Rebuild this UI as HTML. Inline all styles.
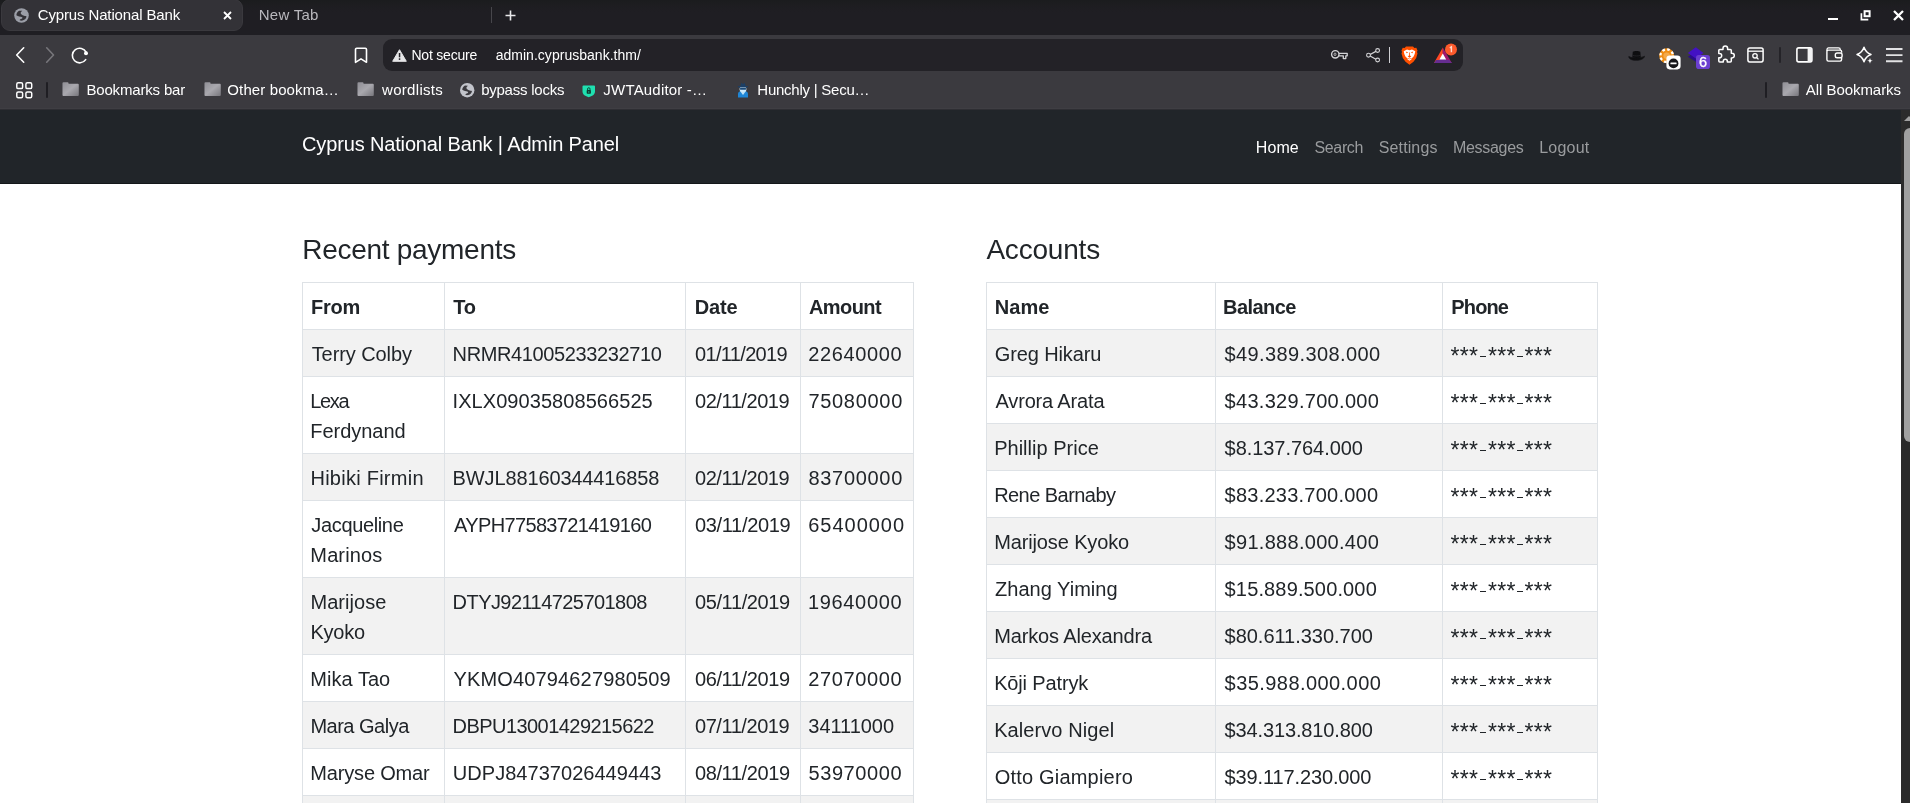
<!DOCTYPE html>
<html><head><meta charset="utf-8"><title>Cyprus National Bank</title>
<style>
*{box-sizing:border-box}
html,body{margin:0;padding:0;overflow:hidden}
body{width:1910px;height:803px;overflow:hidden;position:relative;background:#fff;font-family:"Liberation Sans",sans-serif;}
.t{white-space:nowrap;display:inline-block}
.a{position:absolute}
/* ---------- browser chrome ---------- */
#chrome{will-change:transform;position:absolute;left:0;top:0;width:1910px;height:110px;background:#3b3a3f;box-shadow:inset 0 -1px 0 #2e2e33,inset 0 -2px 0 #3f3e43;color:#fff;font-size:15px}
#tabstrip{position:absolute;left:0;top:0;width:1910px;height:35px;background:linear-gradient(#1b1c1e 0,#1d1d20 4px,#1f1e23 12px,#1f1e23 100%)}
#tab1{position:absolute;left:1px;top:-1px;width:242px;height:32px;background:#333237;border-radius:9px;border:1px solid #3a393e}
.tt{position:absolute;top:5px;height:20px;line-height:20px;font-size:15px;color:#fff}
#urlbar{position:absolute;left:383px;top:39px;width:1080px;height:32px;background:#232227;border-radius:9px}
.ut{position:absolute;top:45px;height:20px;line-height:20px;font-size:14px;color:#fff}
.bm{position:absolute;top:80px;height:20px;line-height:20px;font-size:15px;color:#fff}
.vsep{position:absolute;width:2px;background:#1f1e23;border-radius:1px}
.fold{position:absolute;top:82px;width:18px;height:14px;transform-origin:0 0;transform:scaleX(0.960)}
svg{position:absolute;overflow:visible}
/* ---------- page ---------- */
#page{will-change:transform;position:absolute;left:0;top:110px;width:1901px;height:693px;overflow:hidden;background:#fff;color:#212529}
#nav{position:absolute;left:0;top:0;width:1901px;height:74px;background:#212529;border-bottom:1px solid #14171a}
.brand{position:absolute;left:301.5px;top:19px;font-size:20px;line-height:30px;color:#fff}
.nl{position:absolute;top:26px;font-size:16px;line-height:24px;color:#9a9c9e}
.h3{position:absolute;top:122.800px;font-size:28px;line-height:34px;color:#212529}
.tb{position:absolute;top:172px;border-collapse:collapse;table-layout:fixed;font-size:20px;line-height:30px;color:#212529}
.tb td,.tb th{border:1px solid #dee2e6;padding:9px 8px 7px 8px;text-align:left;vertical-align:top;overflow:hidden;white-space:nowrap}
.tb th{font-weight:bold}
.tb tr.s td{background:#f2f2f2}
.ph{display:inline-block;position:relative;width:101px;height:30px;vertical-align:top}
.ph i{font-style:normal;position:absolute;top:2.300px;font-size:23px;line-height:30px;letter-spacing:0.350px;white-space:nowrap}
.ph u{position:absolute;top:16.500px;width:6.100px;height:1.500px;background:#212529}
/* ---------- scrollbar ---------- */
#sb{position:absolute;left:1901px;top:110px;width:9px;height:693px;background:#2b2b2b;overflow:hidden}
#sb .arrow{position:absolute;left:3px;top:6px;width:0;height:0;border-left:5px solid transparent;border-right:5px solid transparent;border-bottom:5px solid #a0a0a0}
#sb .thumb{position:absolute;left:3px;top:18px;width:12px;height:314px;border-radius:6px;background:#a0a0a0}

</style></head>
<body>
<div id="chrome">
 <div id="tabstrip">
  <div id="tab1"></div>
  <!-- globe favicon -->
  <svg style="left:13.5px;top:7.5px" width="15" height="15" viewBox="0 0 16 16"><circle cx="8" cy="8" r="7.8" fill="#9b9ea7"/><path d="M5.5 2.9L8.8 3C7.600 4 6.800 5 7.300 6C7.800 7 9 7.400 10 8C11 8.600 12 8.400 13.300 8.900C13.200 11 11.600 12.800 9.200 13.400C7.800 13.700 6.600 13.500 6 13C6 12 7.200 11.900 8.200 11.400C9.400 10.800 9.400 10 8.200 9.500C6.800 9 4.500 9 2.500 7.600C2.700 5.400 3.800 3.700 5.500 2.900Z" fill="#333237"/></svg>
  <div class="tt" style="left:37px"><span class="t " id="t0" style="margin-left:0.74px;letter-spacing:-0.137px">Cyprus National Bank</span></div>
  <svg style="left:222.5px;top:10.500px" width="9" height="9" viewBox="0 0 9 9"><path d="M1 1L8 8M8 1L1 8" stroke="#fff" stroke-width="1.800" fill="none"/></svg>
  <div class="tt" style="left:258.500px;color:#b9b8bd"><span class="t " id="t1" style="margin-left:0.17px;letter-spacing:0.273px">New Tab</span></div>
  <div class="a" style="left:491px;top:7px;width:1px;height:16px;background:#47464b"></div>
  <svg style="left:504.500px;top:9.500px" width="11" height="11" viewBox="0 0 11 11"><path d="M5.500 0.500V10.500M0.500 5.500H10.500" stroke="#e8e8ea" stroke-width="1.600" fill="none"/></svg>
  <!-- window controls -->
 <div class="a" style="left:1828px;top:17.600px;width:10px;height:2.300px;background:#fff"></div>
 <svg style="left:1859.5px;top:9.5px" width="11" height="11" viewBox="0 0 11 11"><rect x="4.6" y="1.2" width="5" height="5" stroke="#fff" stroke-width="2" fill="none"/><path d="M1.4 3.3V9.6H8.3" stroke="#fff" stroke-width="1.7" fill="none"/></svg>
  <svg style="left:1892.500px;top:10px" width="11" height="11" viewBox="0 0 11 11"><path d="M1 1L10 10M10 1L1 10" stroke="#fff" stroke-width="2.300" fill="none"/></svg>
 </div>
 <!-- toolbar -->
 <svg style="left:15px;top:47px" width="11" height="16" viewBox="0 0 11 16"><path d="M8.7 0.8L1.7 8L8.7 15.200" stroke="#fff" stroke-width="1.600" fill="none" stroke-linecap="round" stroke-linejoin="round"/></svg>
 <svg style="left:45px;top:47px" width="11" height="16" viewBox="0 0 11 16"><path d="M1.7 0.8L8.5 8L1.7 15.200" stroke="#77767b" stroke-width="1.600" fill="none" stroke-linecap="round" stroke-linejoin="round"/></svg>
 <svg style="left:71px;top:46.5px" width="18" height="17" viewBox="0 0 18 17"><path d="M15.2 5.3A7.300 7.300 0 1 0 14.700 12.600" stroke="#fff" stroke-width="1.600" fill="none" stroke-linecap="round"/><circle cx="15" cy="6.200" r="2" fill="#fff"/></svg>
 <svg style="left:353.500px;top:47px" width="14" height="17" viewBox="0 0 14 17"><path d="M1.500 2.500a1.200 1.200 0 0 1 1.200-1.200H11.300a1.200 1.200 0 0 1 1.200 1.200V15.300L7 11.800L1.500 15.300Z" stroke="#fff" stroke-width="1.600" fill="none" stroke-linejoin="round"/></svg>
 <div id="urlbar"></div>
 <svg style="left:391.500px;top:48.500px" width="15" height="13" viewBox="0 0 15 13"><path d="M7.500 0.700L14.300 12.300H0.700Z" fill="#e6e6e8" stroke="#e6e6e8" stroke-width="1" stroke-linejoin="round"/><rect x="6.800" y="4" width="1.500" height="4.300" fill="#232227"/><rect x="6.800" y="9.300" width="1.500" height="1.600" fill="#232227"/></svg>
 <div class="ut" style="left:411px"><span class="t " id="t2" style="margin-left:0.47px;letter-spacing:-0.206px">Not secure</span></div>
 <div class="ut" style="left:494.500px"><span class="t " id="t3" style="margin-left:1.16px;letter-spacing:0.026px">admin.cyprusbank.thm/</span></div>
 <!-- url bar right icons -->
 <svg style="left:1330.7px;top:49px" width="17" height="11" viewBox="0 0 17 11"><circle cx="4.3" cy="5.3" r="3.7" stroke="#d4d4d7" stroke-width="1.400" fill="none"/><ellipse cx="4" cy="5.3" rx="1" ry="1.300" stroke="#d4d4d7" stroke-width="0.800" fill="none"/><path d="M8 4.300H16.200V6.800H14.800V9.600H12.300V6.800H8" stroke="#d4d4d7" stroke-width="1.300" fill="none" stroke-linejoin="round"/></svg>
 <svg style="left:1366px;top:47.700px" width="14.500" height="15" viewBox="0 0 14.500 15"><path d="M11.200 2.600L2.800 7.200L11.200 11.900" stroke="#d4d4d7" stroke-width="1.200" fill="none"/><circle cx="11.600" cy="2.500" r="1.900" fill="#232227" stroke="#d4d4d7" stroke-width="1.100"/><circle cx="2.500" cy="7.200" r="1.900" fill="#232227" stroke="#d4d4d7" stroke-width="1.100"/><circle cx="11.600" cy="12" r="1.900" fill="#232227" stroke="#d4d4d7" stroke-width="1.100"/></svg>
 <div class="a" style="left:1389px;top:47px;width:1.200px;height:16px;background:#cfcfd3"></div>
 <!-- brave lion -->
 <svg style="left:1400.5px;top:45.500px" width="17" height="19" viewBox="0 0 17 19"><path d="M5 0.500H12L13.400 2L15.300 1.800L16.500 4.500L16 6L16.500 7.500L15.200 12L12.500 15.800L8.500 18.700L4.500 15.800L1.800 12L0.500 7.500L1 6L0.500 4.500L1.700 1.800L3.600 2Z" fill="#ff5000"/><path d="M8.500 4.300L11 3.500L14.300 5.300L13.700 8L12.600 10.500L10.800 12.200L10.600 13.300L8.500 14.800L6.400 13.300L6.200 12.200L4.400 10.500L3.300 8L2.700 5.300L6 3.500Z" fill="#fff"/><path d="M4.800 5.600L7.200 6.500L5.600 7.200ZM12.200 5.600L9.800 6.500L11.400 7.200ZM8.100 6.500H8.900V9.500L10.300 10.300L8.500 11.800L6.700 10.300L8.100 9.500ZM6.300 12.100L8.500 12.700L10.700 12.100L10.500 12.800L8.500 13.300L6.500 12.800Z" fill="#ff5000"/></svg>
 <!-- BAT triangle -->
 <svg style="left:1433px;top:42.500px" width="26" height="22" viewBox="0 0 26 22"><path d="M9.800 4.400L1 20H9.800Z" fill="#ff4724"/><path d="M9.800 4.400L18.800 20H9.800Z" fill="#a0176e"/><path d="M1 20H18.800L9.800 14.500Z" fill="#662d91"/><path d="M1 20H18.800L16.300 17H3.200Z" fill="#662d91"/><path d="M9.800 10.500L13.200 16.600H6.400Z" fill="#fff"/><circle cx="18" cy="6.500" r="6" fill="#fc5a2c"/><path d="M16.800 4.800L18.400 3.800V9.300" stroke="#ffd9cc" stroke-width="1.400" fill="none"/></svg>
 <!-- extension icons -->
 <svg style="left:1627.5px;top:49.500px" width="18" height="12" viewBox="0 0 18 12"><path d="M0.8 6.500C0.800 9.500 5 10.300 8.500 10.300S16 9 16.500 6.200C14 8 3.500 8.500 0.800 6.500Z" fill="#0e0e10" stroke="#141416" stroke-width="0.800"/><path d="M4.300 7.300L4.800 1.800C6 0.600 11 0.600 12.300 1.800L12.800 7.300C10.500 8.300 6.500 8.300 4.300 7.300Z" fill="#0e0e10"/><path d="M4.500 5.200C7 6.200 10.500 6.200 12.700 5.200" stroke="#2a2a2e" stroke-width="0.700" fill="none"/></svg>
 <svg style="left:1658.5px;top:47.500px" width="24" height="24" viewBox="0 0 24 24"><circle cx="7.700" cy="7.700" r="7.500" fill="#ee8d16"/><circle cx="7.700" cy="7.700" r="6.300" fill="none" stroke="#fff" stroke-width="2.200" stroke-dasharray="2.600 2.300"/><circle cx="7.700" cy="7.700" r="3.300" fill="#f4a94a"/><rect x="7.400" y="7.500" width="14.200" height="13.900" rx="3.300" fill="#fff"/><circle cx="14.500" cy="15.400" r="4.900" fill="#17171a"/><rect x="11.400" y="14.500" width="6.200" height="1.800" rx="0.500" fill="#fff"/></svg>
 <svg style="left:1687px;top:47px" width="24" height="23" viewBox="0 0 24 23"><path d="M0.800 9.800L8.800 5L16.500 9.800L8.800 14.800Z" fill="#2a0e86"/><path d="M0.800 6L8.800 0.200L16.500 6L8.800 11.500Z" fill="#4311c4"/><rect x="9" y="8" width="14" height="14" rx="2.800" fill="#6b3fd0"/><text x="16" y="19.700" font-family="Liberation Sans" font-size="14.500" fill="#fff" stroke="#fff" stroke-width="0.300" text-anchor="middle">6</text></svg>
 <svg style="left:1717px;top:45.300px" width="17" height="18" viewBox="0 0 17 18"><path d="M6 3.200a2.300 2.300 0 0 1 4.600 0V4.500H13.300a1 1 0 0 1 1 1V8.300H15a2.300 2.300 0 0 1 0 4.600H14.300V16a1 1 0 0 1-1 1H10.300V16.200a2 2 0 0 0-4 0V17H2.800a1 1 0 0 1-1-1V12.800H2.500a2.200 2.200 0 0 0 0-4.400H1.800V5.500a1 1 0 0 1 1-1H6Z" stroke="#fff" stroke-width="1.500" fill="none" stroke-linejoin="round"/></svg>
 <svg style="left:1746.800px;top:47.300px" width="17" height="16" viewBox="0 0 17 16"><rect x="0.900" y="0.900" width="15.200" height="14" rx="1.800" stroke="#fff" stroke-width="1.500" fill="none"/><path d="M0.900 4.200H16.100" stroke="#fff" stroke-width="1.300"/><circle cx="8" cy="8.800" r="2.200" stroke="#fff" stroke-width="1.300" fill="none"/><path d="M9.600 10.500L11.500 12.400" stroke="#fff" stroke-width="1.300"/></svg>
 <div class="a" style="left:1779px;top:47.300px;width:2px;height:15.500px;background:#242328;border-radius:1px"></div>
 <svg style="left:1795.7px;top:47.300px" width="17" height="16" viewBox="0 0 17 16"><rect x="0.900" y="0.900" width="15" height="14" rx="1.800" stroke="#fff" stroke-width="1.600" fill="none"/><path d="M11.600 0.900H14.100a1.800 1.800 0 0 1 1.800 1.800V13.100a1.800 1.800 0 0 1-1.800 1.800H11.600Z" fill="#f2f2f3"/></svg>
 <svg style="left:1825.7px;top:47.400px" width="17" height="15" viewBox="0 0 17 15"><path d="M15.600 5.800V4.600a1.500 1.500 0 0 0-1.500-1.500H2.400a1.500 1.500 0 0 0-1.500 1.500V12.600a1.500 1.500 0 0 0 1.500 1.500H14.100a1.500 1.500 0 0 0 1.500-1.500V11" stroke="#fff" stroke-width="1.400" fill="none"/><path d="M1 4V2.400a1.500 1.500 0 0 1 1.500-1.500H12.500a1.800 1.800 0 0 1 1.800 1.800V3" stroke="#fff" stroke-width="1.300" fill="none"/><rect x="9.300" y="6" width="6.800" height="4.800" rx="1.800" stroke="#fff" stroke-width="1.400" fill="none"/></svg>
 <svg style="left:1855.5px;top:45.800px" width="18" height="18" viewBox="0 0 18 18"><path d="M8 1.300Q9.800 6.700 15 8.500Q9.800 10.300 8 15.700Q6.200 10.300 1 8.500Q6.200 6.700 8 1.300Z" stroke="#fff" stroke-width="1.500" fill="none" stroke-linejoin="round"/><path d="M14 11.800C14.400 14 14.800 14.400 17 14.800C14.800 15.200 14.400 15.600 14 17.800C13.600 15.600 13.200 15.200 11 14.800C13.200 14.400 13.600 14 14 11.800Z" fill="#fff"/></svg>
 <svg style="left:1885.800px;top:48px" width="16.500" height="14" viewBox="0 0 16.500 14"><path d="M0 1H16.500M0 7.100H16.500M0 13.200H16.500" stroke="#e2e2e4" stroke-width="1.900"/></svg>
 <!-- bookmarks bar -->
 <svg style="left:15.5px;top:81.700px" width="16.500" height="16.500" viewBox="0 0 17 17"><rect x="0.8" y="0.8" width="6" height="6" rx="1.500" stroke="#fff" stroke-width="1.500" fill="none"/><rect x="10.2" y="0.8" width="6" height="6" rx="1.500" stroke="#fff" stroke-width="1.500" fill="none"/><rect x="0.8" y="10.2" width="6" height="6" rx="1.500" stroke="#fff" stroke-width="1.500" fill="none"/><rect x="10.2" y="10.2" width="6" height="6" rx="1.500" stroke="#fff" stroke-width="1.500" fill="none"/></svg>
 <div class="vsep" style="left:46px;top:82px;height:16px"></div>
 <svg class="fold" style="left:62px"><path d="M0.500 1.300a1 1 0 0 1 1-1H5.800a1 1 0 0 1 1 1V1.800H16.500a1 1 0 0 1 1 1V13a1 1 0 0 1-1 1H1.500a1 1 0 0 1-1-1Z" fill="url(#fg)"/></svg>
 <div class="bm" style="left:85.500px"><span class="t " id="t4" style="margin-left:0.88px;letter-spacing:-0.163px">Bookmarks bar</span></div>
 <svg class="fold" style="left:203.500px"><path d="M0.500 1.300a1 1 0 0 1 1-1H5.800a1 1 0 0 1 1 1V1.800H16.500a1 1 0 0 1 1 1V13a1 1 0 0 1-1 1H1.500a1 1 0 0 1-1-1Z" fill="url(#fg)"/></svg>
 <div class="bm" style="left:226.500px"><span class="t " id="t5" style="margin-left:0.85px;letter-spacing:0.110px">Other bookma…</span></div>
 <svg class="fold" style="left:357px"><path d="M0.500 1.300a1 1 0 0 1 1-1H5.800a1 1 0 0 1 1 1V1.800H16.500a1 1 0 0 1 1 1V13a1 1 0 0 1-1 1H1.500a1 1 0 0 1-1-1Z" fill="url(#fg)"/></svg>
 <div class="bm" style="left:380.500px"><span class="t " id="t6" style="margin-left:1.59px;letter-spacing:0.292px">wordlists</span></div>
 <svg style="left:459.800px;top:82.600px" width="14.400" height="14.400" viewBox="0 0 16 16"><circle cx="8" cy="8" r="8" fill="#c2c4cb"/><path d="M5.5 2.9L8.8 3C7.6 4 6.8 5 7.3 6C7.8 7 9 7.4 10 8C11 8.6 12 8.4 13.3 8.9C13.2 11 11.6 12.8 9.2 13.4C7.8 13.7 6.6 13.5 6 13C6 12 7.2 11.9 8.2 11.4C9.4 10.8 9.4 10 8.2 9.5C6.8 9 4.5 9 2.5 7.6C2.7 5.4 3.8 3.7 5.5 2.9Z" fill="#3b3a3f"/></svg>
 <div class="bm" style="left:480.500px"><span class="t " id="t7" style="margin-left:0.65px;letter-spacing:-0.237px">bypass locks</span></div>
 <svg style="left:582.3px;top:84.500px" width="13.500" height="12.500" viewBox="0 0 13.500 12.500"><path d="M0.500 1.500a1 1 0 0 1 1-1H12a1 1 0 0 1 1 1V6.500C13 9.500 10 11.300 6.750 12.200C3.500 11.300 0.500 9.500 0.500 6.500Z" fill="#1fe0b0"/><rect x="4.700" y="5" width="4.200" height="3.800" rx="0.700" fill="#0c3a30"/><path d="M5.600 5V3.900a1.200 1.200 0 0 1 2.400 0V5" stroke="#0c3a30" stroke-width="0.900" fill="none"/><circle cx="6.800" cy="6.900" r="0.600" fill="#1fe0b0"/></svg>
 <div class="bm" style="left:602px"><span class="t " id="t8" style="margin-left:1.37px;letter-spacing:0.192px">JWTAuditor -…</span></div>
 <svg style="left:737.3px;top:82px" width="12" height="16" viewBox="0 0 12 16"><path d="M1 15.500V11.500C1 9.800 3 9 6 9S11 9.800 11 11.500V15.500Z" fill="#1f86d6"/><path d="M3.200 9.300L6 13L8.800 9.300Z" fill="#bfe3f7"/><rect x="2.600" y="4.500" width="6.800" height="5.500" rx="2.200" fill="#cfeafa"/><rect x="2.800" y="6" width="6.400" height="1.700" rx="0.800" fill="#1c4a78"/><path d="M3.300 4.200L4.200 0.800L6 2L7.800 0.800L8.700 4.200Z" fill="#1c3f66"/><path d="M0.800 4H11.200L10.300 5.400H1.700Z" fill="#1c3f66"/></svg>
 <div class="bm" style="left:756px"><span class="t " id="t9" style="margin-left:1.34px;letter-spacing:-0.245px">Hunchly | Secu…</span></div>
 <div class="vsep" style="left:1765px;top:82px;height:16px"></div>
 <svg class="fold" style="left:1781.500px"><path d="M0.500 1.300a1 1 0 0 1 1-1H5.800a1 1 0 0 1 1 1V1.800H16.500a1 1 0 0 1 1 1V13a1 1 0 0 1-1 1H1.500a1 1 0 0 1-1-1Z" fill="url(#fg)"/></svg>
 <div class="bm" style="left:1804.500px"><span class="t " id="t10" style="margin-left:1.35px;letter-spacing:-0.057px">All Bookmarks</span></div>
 <svg width="0" height="0"><defs><linearGradient id="fg" x1="0" y1="0" x2="1" y2="1"><stop offset="0" stop-color="#8f8e95"/><stop offset="0.500" stop-color="#a9a8ae"/><stop offset="1" stop-color="#77767c"/></linearGradient></defs></svg>
</div>

<div id="page">
<div id="nav">
  <div class="brand"><span class="t " id="t11" style="margin-left:0.59px;letter-spacing:-0.152px">Cyprus National Bank | Admin Panel</span></div>
  <div class="nl" style="left:1255px;color:#fff"><span class="t " id="t12" style="margin-left:0.82px;letter-spacing:0.067px">Home</span></div>
  <div class="nl" style="left:1314px"><span class="t " id="t13" style="margin-left:0.56px;letter-spacing:-0.376px">Search</span></div>
  <div class="nl" style="left:1378px"><span class="t " id="t14" style="margin-left:0.84px;letter-spacing:0.106px">Settings</span></div>
  <div class="nl" style="left:1452px"><span class="t " id="t15" style="margin-left:0.92px;letter-spacing:-0.296px">Messages</span></div>
  <div class="nl" style="left:1539px"><span class="t " id="t16" style="margin-left:0.24px;letter-spacing:0.225px">Logout</span></div>
</div>
<div class="h3" style="left:301px"><span class="t " id="t17" style="margin-left:1.30px;letter-spacing:-0.288px">Recent payments</span></div>
<div class="h3" style="left:985px"><span class="t " id="t18" style="margin-left:1.40px;letter-spacing:-0.198px">Accounts</span></div>
<table class="tb" style="left:302px;width:611px"><colgroup><col style="width:142px"><col style="width:241px"><col style="width:115px"><col style="width:113px"></colgroup><tr class="hd"><th><span class="t " id="t19" style="margin-left:0.05px;letter-spacing:-0.221px">From</span></th><th><span class="t " id="t20" style="margin-left:0.20px;letter-spacing:-0.199px">To</span></th><th><span class="t " id="t21" style="margin-left:0.81px;letter-spacing:-0.141px">Date</span></th><th><span class="t " id="t22" style="margin-left:-0.02px;letter-spacing:-0.574px">Amount</span></th></tr><tr class="s"><td><span class="t " id="t23" style="margin-left:0.66px;letter-spacing:-0.077px">Terry Colby</span></td><td><span class="t " id="t24" style="margin-left:-0.42px;letter-spacing:-0.381px">NRMR41005233232710</span></td><td><span class="t " id="t25" style="margin-left:0.96px;letter-spacing:-0.657px">01/11/2019</span></td><td><span class="t " id="t26" style="margin-left:-0.72px;letter-spacing:0.633px">22640000</span></td></tr><tr class=""><td><span class="t " id="t27" style="margin-left:-0.67px;letter-spacing:-1.380px">Lexa</span><br><span class="t " id="t28" style="margin-left:-0.67px;letter-spacing:-0.043px">Ferdynand</span></td><td><span class="t " id="t29" style="margin-left:-0.45px;letter-spacing:0.062px">IXLX09035808566525</span></td><td><span class="t " id="t30" style="margin-left:0.95px;letter-spacing:-0.433px">02/11/2019</span></td><td><span class="t " id="t31" style="margin-left:-0.62px;letter-spacing:0.705px">75080000</span></td></tr><tr class="s"><td><span class="t " id="t32" style="margin-left:-0.55px;letter-spacing:0.254px">Hibiki Firmin</span></td><td><span class="t " id="t33" style="margin-left:-0.42px;letter-spacing:-0.130px">BWJL88160344416858</span></td><td><span class="t " id="t34" style="margin-left:0.96px;letter-spacing:-0.434px">02/11/2019</span></td><td><span class="t " id="t35" style="margin-left:-0.55px;letter-spacing:0.695px">83700000</span></td></tr><tr class=""><td><span class="t " id="t36" style="margin-left:0.37px;letter-spacing:-0.359px">Jacqueline</span><br><span class="t " id="t37" style="margin-left:-0.67px;letter-spacing:0.123px">Marinos</span></td><td><span class="t " id="t38" style="margin-left:1.04px;letter-spacing:-0.642px">AYPH77583721419160</span></td><td><span class="t " id="t39" style="margin-left:0.95px;letter-spacing:-0.322px">03/11/2019</span></td><td><span class="t " id="t40" style="margin-left:-0.74px;letter-spacing:0.971px">65400000</span></td></tr><tr class="s"><td><span class="t " id="t41" style="margin-left:-0.55px;letter-spacing:0.060px">Marijose</span><br><span class="t " id="t42" style="margin-left:-0.55px;letter-spacing:-0.240px">Kyoko</span></td><td><span class="t " id="t43" style="margin-left:-0.42px;letter-spacing:-0.557px">DTYJ92114725701808</span></td><td><span class="t " id="t44" style="margin-left:0.96px;letter-spacing:-0.377px">05/11/2019</span></td><td><span class="t " id="t45" style="margin-left:-1.12px;letter-spacing:0.679px">19640000</span></td></tr><tr class=""><td><span class="t " id="t46" style="margin-left:-0.67px;letter-spacing:0.023px">Mika Tao</span></td><td><span class="t " id="t47" style="margin-left:0.51px;letter-spacing:0.149px">YKMO40794627980509</span></td><td><span class="t " id="t48" style="margin-left:0.95px;letter-spacing:-0.378px">06/11/2019</span></td><td><span class="t " id="t49" style="margin-left:-0.72px;letter-spacing:0.619px">27070000</span></td></tr><tr class="s"><td><span class="t " id="t50" style="margin-left:-0.55px;letter-spacing:-0.508px">Mara Galya</span></td><td><span class="t " id="t51" style="margin-left:-0.42px;letter-spacing:-0.558px">DBPU13001429215622</span></td><td><span class="t " id="t52" style="margin-left:0.96px;letter-spacing:-0.435px">07/11/2019</span></td><td><span class="t " id="t53" style="margin-left:-0.66px;letter-spacing:-0.048px">34111000</span></td></tr><tr class=""><td><span class="t " id="t54" style="margin-left:-0.67px;letter-spacing:-0.177px">Maryse Omar</span></td><td><span class="t " id="t55" style="margin-left:-0.21px;letter-spacing:0.037px">UDPJ84737026449443</span></td><td><span class="t " id="t56" style="margin-left:0.95px;letter-spacing:-0.378px">08/11/2019</span></td><td><span class="t " id="t57" style="margin-left:-0.56px;letter-spacing:0.597px">53970000</span></td></tr><tr class="s"><td><span class="t " id="t58" style="margin-left:0.00px;letter-spacing:0.000px">Sven Holt</span></td><td><span class="t " id="t59" style="margin-left:0.00px;letter-spacing:0.000px">QWER12345678901234</span></td><td><span class="t " id="t60" style="margin-left:0.00px;letter-spacing:0.000px">09/11/2019</span></td><td><span class="t " id="t61" style="margin-left:0.00px;letter-spacing:0.000px">41200000</span></td></tr></table>
<table class="tb" style="left:986px;width:611px"><colgroup><col style="width:229px"><col style="width:227px"><col style="width:155px"></colgroup><tr class="hd"><th><span class="t " id="t62" style="margin-left:-0.20px;letter-spacing:0.021px">Name</span></th><th><span class="t " id="t63" style="margin-left:-0.94px;letter-spacing:-0.574px">Balance</span></th><th><span class="t " id="t64" style="margin-left:0.31px;letter-spacing:-0.862px">Phone</span></th></tr><tr class="s"><td><span class="t " id="t65" style="margin-left:-0.21px;letter-spacing:-0.132px">Greg Hikaru</span></td><td><span class="t " id="t66" style="margin-left:0.59px;letter-spacing:0.387px">$49.389.308.000</span></td><td><span class="ph"><i style="left:-0.600px">***</i><u style="left:29px"></u><i style="left:36.900px">***</i><u style="left:66.200px"></u><i style="left:73.500px">***</i></span></td></tr><tr class=""><td><span class="t " id="t67" style="margin-left:0.49px;letter-spacing:-0.161px">Avrora Arata</span></td><td><span class="t " id="t68" style="margin-left:0.60px;letter-spacing:0.293px">$43.329.700.000</span></td><td><span class="ph"><i style="left:-0.600px">***</i><u style="left:29px"></u><i style="left:36.900px">***</i><u style="left:66.200px"></u><i style="left:73.500px">***</i></span></td></tr><tr class="s"><td><span class="t " id="t69" style="margin-left:-0.89px;letter-spacing:0.023px">Phillip Price</span></td><td><span class="t " id="t70" style="margin-left:0.59px;letter-spacing:-0.053px">$8.137.764.000</span></td><td><span class="ph"><i style="left:-0.600px">***</i><u style="left:29px"></u><i style="left:36.900px">***</i><u style="left:66.200px"></u><i style="left:73.500px">***</i></span></td></tr><tr class=""><td><span class="t " id="t71" style="margin-left:-0.89px;letter-spacing:-0.543px">Rene Barnaby</span></td><td><span class="t " id="t72" style="margin-left:0.60px;letter-spacing:0.236px">$83.233.700.000</span></td><td><span class="ph"><i style="left:-0.600px">***</i><u style="left:29px"></u><i style="left:36.900px">***</i><u style="left:66.200px"></u><i style="left:73.500px">***</i></span></td></tr><tr class="s"><td><span class="t " id="t73" style="margin-left:-0.89px;letter-spacing:-0.125px">Marijose Kyoko</span></td><td><span class="t " id="t74" style="margin-left:0.59px;letter-spacing:0.293px">$91.888.000.400</span></td><td><span class="ph"><i style="left:-0.600px">***</i><u style="left:29px"></u><i style="left:36.900px">***</i><u style="left:66.200px"></u><i style="left:73.500px">***</i></span></td></tr><tr class=""><td><span class="t " id="t75" style="margin-left:0.11px;letter-spacing:0.017px">Zhang Yiming</span></td><td><span class="t " id="t76" style="margin-left:0.60px;letter-spacing:0.144px">$15.889.500.000</span></td><td><span class="ph"><i style="left:-0.600px">***</i><u style="left:29px"></u><i style="left:36.900px">***</i><u style="left:66.200px"></u><i style="left:73.500px">***</i></span></td></tr><tr class="s"><td><span class="t " id="t77" style="margin-left:-0.89px;letter-spacing:-0.131px">Markos Alexandra</span></td><td><span class="t " id="t78" style="margin-left:0.59px;letter-spacing:-0.027px">$80.611.330.700</span></td><td><span class="ph"><i style="left:-0.600px">***</i><u style="left:29px"></u><i style="left:36.900px">***</i><u style="left:66.200px"></u><i style="left:73.500px">***</i></span></td></tr><tr class=""><td><span class="t " id="t79" style="margin-left:-0.89px;letter-spacing:-0.139px">Kōji Patryk</span></td><td><span class="t " id="t80" style="margin-left:0.60px;letter-spacing:0.436px">$35.988.000.000</span></td><td><span class="ph"><i style="left:-0.600px">***</i><u style="left:29px"></u><i style="left:36.900px">***</i><u style="left:66.200px"></u><i style="left:73.500px">***</i></span></td></tr><tr class="s"><td><span class="t " id="t81" style="margin-left:-0.89px;letter-spacing:0.090px">Kalervo Nigel</span></td><td><span class="t " id="t82" style="margin-left:0.59px;letter-spacing:-0.135px">$34.313.810.800</span></td><td><span class="ph"><i style="left:-0.600px">***</i><u style="left:29px"></u><i style="left:36.900px">***</i><u style="left:66.200px"></u><i style="left:73.500px">***</i></span></td></tr><tr class=""><td><span class="t " id="t83" style="margin-left:-0.23px;letter-spacing:0.190px">Otto Giampiero</span></td><td><span class="t " id="t84" style="margin-left:0.60px;letter-spacing:-0.131px">$39.117.230.000</span></td><td><span class="ph"><i style="left:-0.600px">***</i><u style="left:29px"></u><i style="left:36.900px">***</i><u style="left:66.200px"></u><i style="left:73.500px">***</i></span></td></tr><tr class="s"><td><span class="t " id="t85" style="margin-left:0.00px;letter-spacing:0.000px">Ilse Warner</span></td><td><span class="t " id="t86" style="margin-left:0.00px;letter-spacing:0.000px">$12.500.000.000</span></td><td><span class="ph"><i style="left:-0.600px">***</i><u style="left:29px"></u><i style="left:36.900px">***</i><u style="left:66.200px"></u><i style="left:73.500px">***</i></span></td></tr></table>
</div>
<div id="sb"><div class="arrow"></div><div class="thumb"></div></div>

</body></html>
